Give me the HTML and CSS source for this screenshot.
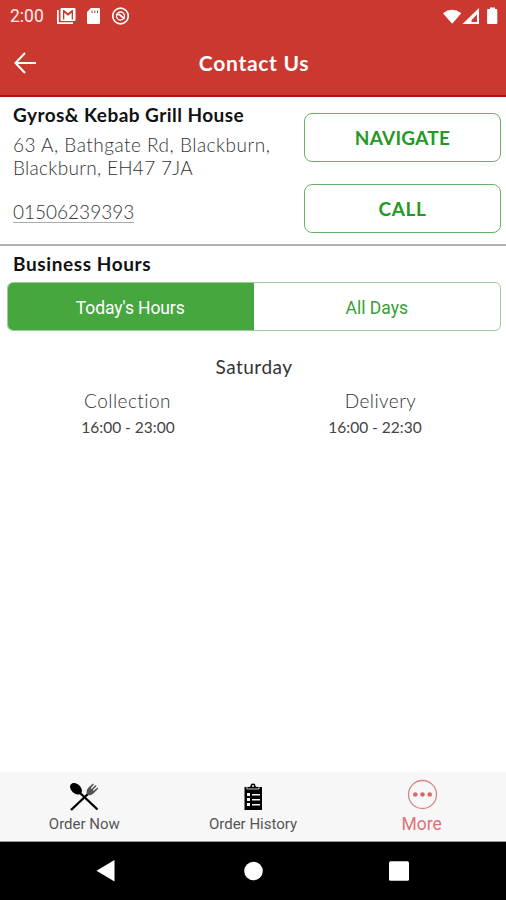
FILE: index.html
```html
<!DOCTYPE html>
<html lang="en">
<head>
<meta charset="utf-8">
<title>Contact Us</title>
<link rel="stylesheet" href="styles.css">
</head>
<body>
<header class="header">
  <div class="status">
    <span class="time">2:00</span>
    <svg class="status-left" width="76" height="20" viewBox="0 0 76 20" fill="#fff">
      <path d="M1 4v14h16v-1.800H2.800V4z"/>
      <path fill-rule="evenodd" d="M5.500 2h13q1 0 1 1v11q0 1-1 1h-13q-1 0-1-1V3q0-1 1-1zM7 4v9.500h1.300V6.800l3.700 3 3.700-3v6.700H17V4h-1L12 7.300 8 4z"/>
      <path fill-rule="evenodd" d="M35 2h8q1 0 1 1v14q0 1-1 1H32q-1 0-1-1V6zM35.500 4.500v2.500h1V4.500zM38.300 4.500v2.500h1V4.500zM41 4.500v2.500h1V4.500z"/>
      <g fill="none" stroke="#fff"><circle cx="64.500" cy="10" r="7.800" stroke-width="1.700"/><circle cx="64.500" cy="10" r="4" stroke-width="1.300"/><path d="M60.500 8.700q2.500-1 4 .7t4 3.400" stroke-width="1.800"/></g>
    </svg>
    <svg class="status-right" width="58" height="20" viewBox="0 0 58 20" fill="#fff">
      <path d="M2 7.200Q11 .5 20.300 7.200L11.200 17.700z"/>
      <path fill-rule="evenodd" d="M38 2v16H21.500zM36 8.500L30.500 14v2H36z"/>
      <path d="M47 3h2V1.500h5V3h1.500q.8 0 .8.900v13.200q0 .9-.8.900h-8.500q-.9 0-.9-.9V3.900q0-.9.900-.9z"/>
    </svg>
  </div>
  <div class="title-bar">
    <svg class="back" width="24" height="24" viewBox="0 0 24 24" fill="none" stroke="#fff" stroke-width="2"><path d="M23 12H3M12 2L2.500 12 12 22"/></svg>
    <h1 class="title">Contact Us</h1>
  </div>
</header>
<main class="main">
  <section class="info">
    <div class="details">
      <h2 class="name">Gyros&amp; Kebab Grill House</h2>
      <p class="address"><span class="addr-one">63 A, Bathgate Rd, Blackburn,</span><br><span class="addr-two">Blackburn, EH47 7JA</span></p>
      <a class="phone">01506239393</a>
    </div>
    <div class="actions">
      <button class="action navigate">NAVIGATE</button>
      <button class="action call">CALL</button>
    </div>
  </section>
  <section class="hours">
    <h2 class="hours-title">Business Hours</h2>
    <div class="tabs">
      <div class="tab active">Today's Hours</div>
      <div class="tab">All Days</div>
    </div>
    <div class="day">Saturday</div>
    <div class="services">
      <div class="service collection"><div class="kind">Collection</div><div class="range">16:00 - 23:00</div></div>
      <div class="service delivery"><div class="kind">Delivery</div><div class="range">16:00 - 22:30</div></div>
    </div>
  </section>
</main>
<nav class="bottom-nav">
  <div class="item">
    <svg class="icon" width="32" height="32" viewBox="0 0 32 32">
      <ellipse cx="8" cy="7.800" rx="6.800" ry="4.700" transform="rotate(42 8 7.800)"/>
      <path d="M11 11l18.500 17.500" stroke="#000" stroke-width="2.400"/>
      <path d="M21 12L3 29" stroke="#000" stroke-width="2.400"/>
      <path d="M18.500 12q-.5-3 2-5.500L25 2.500l1 .8-3.200 4 .8.600L27.600 4l1 1-3.800 4 .7.700L29.500 6.500l.8.900-4.800 5.100q-3.300 2.500-5.500 1.600z" fill="#555"/>
    </svg>
    <span class="label">Order Now</span>
  </div>
  <div class="item">
    <svg class="icon" width="32" height="32" viewBox="0 0 32 32">
      <path d="M7.500 6h17.500v23H7.500z"/>
      <path d="M10 8V5.500h3Q13 2 16 2t3 3.500h3V8z" stroke="#f7f7f7" stroke-width=".8"/>
      <circle cx="16" cy="5" r="1" fill="#f7f7f7"/>
      <path d="M10 12h3v3h-3zM10 17h3v3h-3zM10 22h3v3h-3zM15 13h8v1.500h-8zM15 18h8v1.500h-8zM15 23h8v1.500h-8z" fill="#f7f7f7"/>
    </svg>
    <span class="label">Order History</span>
  </div>
  <div class="item more">
    <svg class="icon" width="32" height="32" viewBox="0 0 32 32" fill="#d8686b"><circle cx="16.500" cy="16.500" r="14" fill="none" stroke="#dc8588" stroke-width="1.300"/><circle cx="9.300" cy="16.500" r="2.300"/><circle cx="16.500" cy="16.500" r="2.300"/><circle cx="23.700" cy="16.500" r="2.300"/></svg>
    <span class="label">More</span>
  </div>
</nav>
<footer class="system">
  <svg width="20" height="22" viewBox="0 0 20 22" fill="#fff"><path d="M18.500 0v21.500L.5 10.800z"/></svg>
  <svg width="20" height="22" viewBox="0 0 20 22" fill="#fff"><circle cx="10.500" cy="11" r="9.300"/></svg>
  <svg width="20" height="22" viewBox="0 0 20 22" fill="#fff"><rect y="1.300" width="20" height="19.500" rx="1.500"/></svg>
</footer>
</body>
</html>
```
FILE: styles.css
```css
* { box-sizing: border-box; }
body { margin: 0; width: 506px; height: 900px; display: flex; flex-direction: column; background: #fff; color: #222; font-family: Lato, "Liberation Sans", sans-serif; overflow: hidden; }
h1, h2, p { margin: 0; }
svg { display: block; flex: none; }

.header { height: 97px; background: #cb382f; border-bottom: 2px solid #b0140f; color: #fff; }
.status { height: 32px; display: flex; align-items: center; padding: 0 7px 0 10px; }
.time { width: 46px; font: 17.5px/32px Roboto, sans-serif; color: #fdeeec; }
.status-right { margin-left: auto; }
.title-bar { height: 61px; display: grid; grid-template-columns: 60px 1fr 60px; align-items: center; }
.back { margin-left: 13px; margin-top: 1px; }
.title { text-align: center; font-size: 21px; line-height: 30px; font-weight: 700; letter-spacing: .7px; padding-left: 2px; }

.main { flex: 1; }
.info { height: 149px; display: flex; justify-content: space-between; padding: 5px 5px 0 13px; border-bottom: 2px solid #b0b0b0; white-space: nowrap; }
.name, .hours-title { color: #111; font-size: 19px; line-height: 26px; font-weight: 700; letter-spacing: .45px; }
.address { margin-top: 5px; font-size: 19px; line-height: 23px; color: #333; font-weight: 300; letter-spacing: .5px; }
.addr-two { letter-spacing: .3px; }
.phone { display: inline-block; margin-top: 23px; border-bottom: 1px solid #aaa; font-size: 19px; line-height: 20px; color: #333; font-weight: 300; }
.actions { width: 197px; padding-top: 11px; display: flex; flex-direction: column; gap: 22px; }
.action { height: 49px; padding: 0; border: 1.5px solid #69b365; border-radius: 8px; background: #fff; color: #259925; font: 700 19px/46px Lato, sans-serif; letter-spacing: .25px; }
.action.call { letter-spacing: .6px; }

.hours-title { margin-top: 5px; padding-left: 13px; letter-spacing: .6px; }
.tabs { display: flex; height: 49px; margin: 5px 5px 0 7px; border: 1px solid #9dcb9b; border-radius: 6px; overflow: hidden; }
.tab { flex: 1; text-align: center; font: 17.5px/51px Roboto, sans-serif; color: #35a035; }
.tab.active { background: #46a73f; color: #fff; margin: -1px 0 -1px -1px; line-height: 53px; letter-spacing: -.1px; }
.day { margin-top: 23px; text-align: center; font-size: 19px; line-height: 26px; color: #333; letter-spacing: .5px; padding-left: 2px; }
.services { display: flex; margin-top: 8px; text-align: center; }
.service { flex: 1; }
.kind { font-size: 19px; line-height: 26px; color: #333; font-weight: 300; letter-spacing: .45px; padding-left: 2px; }
.range { font-size: 15.5px; line-height: 26px; color: #444; letter-spacing: 0; padding-left: 3px; }
.delivery .range { padding: 0 9px 0 0; }

.bottom-nav { height: 70px; display: flex; background: #f7f7f7; border-bottom: 1px solid #999; }
.item { flex: 1; display: flex; flex-direction: column; align-items: center; padding-top: 9px; }
.label { font: 15px/20px Roboto, sans-serif; color: #555; margin-top: 1px; }
.more { padding-top: 6px; }
.more .label { color: #dc7376; font-size: 17.5px; margin-top: 4px; }
.system { height: 58px; display: flex; justify-content: space-between; padding: 18px 97px 0 96px; background: #000; }
```
